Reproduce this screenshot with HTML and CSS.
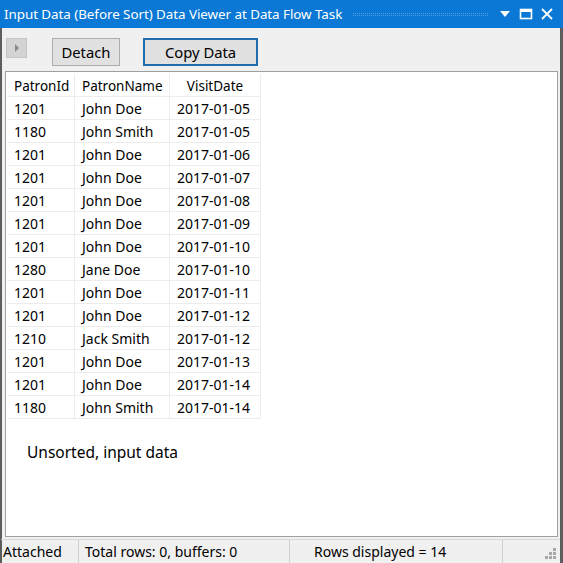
FILE: index.html
```html
<!DOCTYPE html>
<html>
<head>
<meta charset="utf-8">
<link rel="stylesheet" href="styles.css">
</head>
<body>
<div class="window">
  <div class="titlebar">
    <span class="title">Input Data (Before Sort) Data Viewer at Data Flow Task</span>
    <span class="dots"></span>
    <span class="tbtn first">
      <svg width="12" height="10" viewBox="0 0 12 10"><path d="M1 2 L11 2 L6 8 Z" fill="#fff"/></svg>
    </span>
    <span class="tbtn">
      <svg width="14" height="14" viewBox="0 0 14 14"><rect x="1.5" y="2.5" width="11" height="9" fill="none" stroke="#fff" stroke-width="1.6"/><rect x="1" y="2" width="12" height="3" fill="#fff"/></svg>
    </span>
    <span class="tbtn">
      <svg width="14" height="14" viewBox="0 0 14 14"><path d="M2 2 L12 12 M12 2 L2 12" stroke="#fff" stroke-width="1.8"/></svg>
    </span>
  </div>
  <div class="main">
    <div class="toolbar">
      <span class="play">
        <svg width="8" height="10" viewBox="0 0 8 10"><path d="M2 1 L6 5 L2 9 Z" fill="#8a8a8a"/></svg>
      </span>
      <button class="btn detach">Detach</button>
      <button class="btn copy">Copy Data</button>
    </div>
    <div class="grid">
      <table class="data">
        <thead>
          <tr><th class="c1">PatronId</th><th class="c2">PatronName</th><th class="c3">VisitDate</th></tr>
        </thead>
        <tbody>
          <tr><td>1201</td><td>John Doe</td><td>2017-01-05</td></tr>
          <tr><td>1180</td><td>John Smith</td><td>2017-01-05</td></tr>
          <tr><td>1201</td><td>John Doe</td><td>2017-01-06</td></tr>
          <tr><td>1201</td><td>John Doe</td><td>2017-01-07</td></tr>
          <tr><td>1201</td><td>John Doe</td><td>2017-01-08</td></tr>
          <tr><td>1201</td><td>John Doe</td><td>2017-01-09</td></tr>
          <tr><td>1201</td><td>John Doe</td><td>2017-01-10</td></tr>
          <tr><td>1280</td><td>Jane Doe</td><td>2017-01-10</td></tr>
          <tr><td>1201</td><td>John Doe</td><td>2017-01-11</td></tr>
          <tr><td>1201</td><td>John Doe</td><td>2017-01-12</td></tr>
          <tr><td>1210</td><td>Jack Smith</td><td>2017-01-12</td></tr>
          <tr><td>1201</td><td>John Doe</td><td>2017-01-13</td></tr>
          <tr><td>1201</td><td>John Doe</td><td>2017-01-14</td></tr>
          <tr><td>1180</td><td>John Smith</td><td>2017-01-14</td></tr>
        </tbody>
      </table>
      <div class="note">Unsorted, input data</div>
    </div>
    <div class="status">
      <span class="s s1">Attached</span>
      <span class="s s2">Total rows: 0, buffers: 0</span>
      <span class="s s3">Rows displayed = 14</span>
      <span class="s s4">
        <svg width="12" height="12" viewBox="0 0 12 12" fill="#a8a8a8">
          <rect x="8" y="0" width="3" height="3"/>
          <rect x="4" y="4" width="3" height="3"/><rect x="8" y="4" width="3" height="3"/>
          <rect x="0" y="8" width="3" height="3"/><rect x="4" y="8" width="3" height="3"/><rect x="8" y="8" width="3" height="3"/>
        </svg>
      </span>
    </div>
  </div>
</div>
</body>
</html>
```

FILE: styles.css
```css
* { box-sizing: border-box; }
html, body { margin: 0; padding: 0; }
body {
  width: 563px;
  height: 563px;
  overflow: hidden;
  font-family: "Noto Sans", "Open Sans", sans-serif;
  background: #f0f0f0;
}
.window {
  width: 563px;
  height: 563px;
  display: flex;
  flex-direction: column;
}
.titlebar {
  height: 28px;
  background: #0a78d4;
  color: #fff;
  display: flex;
  align-items: center;
  padding-left: 4px;
  padding-right: 6px;
  flex: none;
}
.title {
  font-size: 13.4px;
  white-space: nowrap;
  letter-spacing: -0.05px;
}
.dots {
  flex: 1;
  margin-left: 11px;
  margin-right: 6px;
  height: 5px;
  background-image:
    linear-gradient(90deg, rgba(255,255,255,0.28) 1px, transparent 1px);
  background-size: 2px 2px;
  -webkit-mask-image: linear-gradient(0deg, #000 1px, transparent 1px);
  mask-image: linear-gradient(0deg, #000 1px, transparent 1px);
  -webkit-mask-size: 2px 2px;
  mask-size: 2px 2px;
}
.tbtn {
  width: 21px;
  display: flex;
  justify-content: center;
  align-items: center;
}
.main {
  flex: 1;
  display: flex;
  flex-direction: column;
  border-left: 2px solid #5d5d5d;
  border-right: 3px solid #5d5d5d;
  min-height: 0;
}
.toolbar {
  height: 43px;
  display: flex;
  align-items: center;
  padding-left: 4px;
  padding-top: 4px;
  flex: none;
}
.play {
  width: 21px;
  height: 20px;
  background: #d4d4d4;
  border: 1px solid #c4c4c4;
  display: flex;
  align-items: center;
  justify-content: center;
  margin-top: -7px;
}
.btn {
  font-family: "Noto Sans", "Open Sans", sans-serif;
  font-size: 14.8px;
  height: 28px;
  background: #e1e1e1;
  color: #000;
  padding: 0;
  margin: 0;
}
.detach {
  width: 68px;
  margin-left: 25px;
  border: 1px solid #adadad;
}
.copy {
  width: 115px;
  margin-left: 23px;
  border: 2px solid #1f6cae;
}
.grid {
  flex: 1;
  margin: 0 2px 2px 3px;
  border: 1px solid #a0a0a0;
  background: #fff;
  padding: 2px 0 0 1px;
  min-height: 0;
}
.data {
  border-collapse: collapse;
  font-size: 14px;
  table-layout: fixed;
  width: 253px;
}
.data th, .data td {
  height: 23px;
  padding: 0 7px;
  border: 1px solid #ececec;
  text-align: left;
  white-space: nowrap;
  font-weight: normal;
  color: #000;
}
.data th { font-size: 13.5px; height: 22px; }
.data thead th { border-top-color: #fff; }
.data tr > :first-child { border-left-color: #fff; padding-left: 6px; }
.c1 { width: 67px; }
.c2 { width: 95px; }
.c3 { width: 91px; text-align: center !important; }
.note {
  font-size: 15.5px;
  margin-top: 22px;
  margin-left: 20px;
}
.status {
  height: 24px;
  flex: none;
  display: flex;
  align-items: center;
  font-size: 14px;
  border-top: 1px solid #d9d9d9;
  margin-left: -1px;
}
.s {
  height: 100%;
  display: flex;
  align-items: center;
  border-right: 1px solid #d0d0d0;
  white-space: nowrap;
}
.s1 { width: 78px; padding-left: 2px; }
.s2 { width: 211px; padding-left: 6px; }
.s3 { width: 213px; padding-left: 24px; }
.s4 { flex: 1; border-right: none; justify-content: flex-end; padding-right: 3px; align-items: flex-end; padding-bottom: 3px; }
```
